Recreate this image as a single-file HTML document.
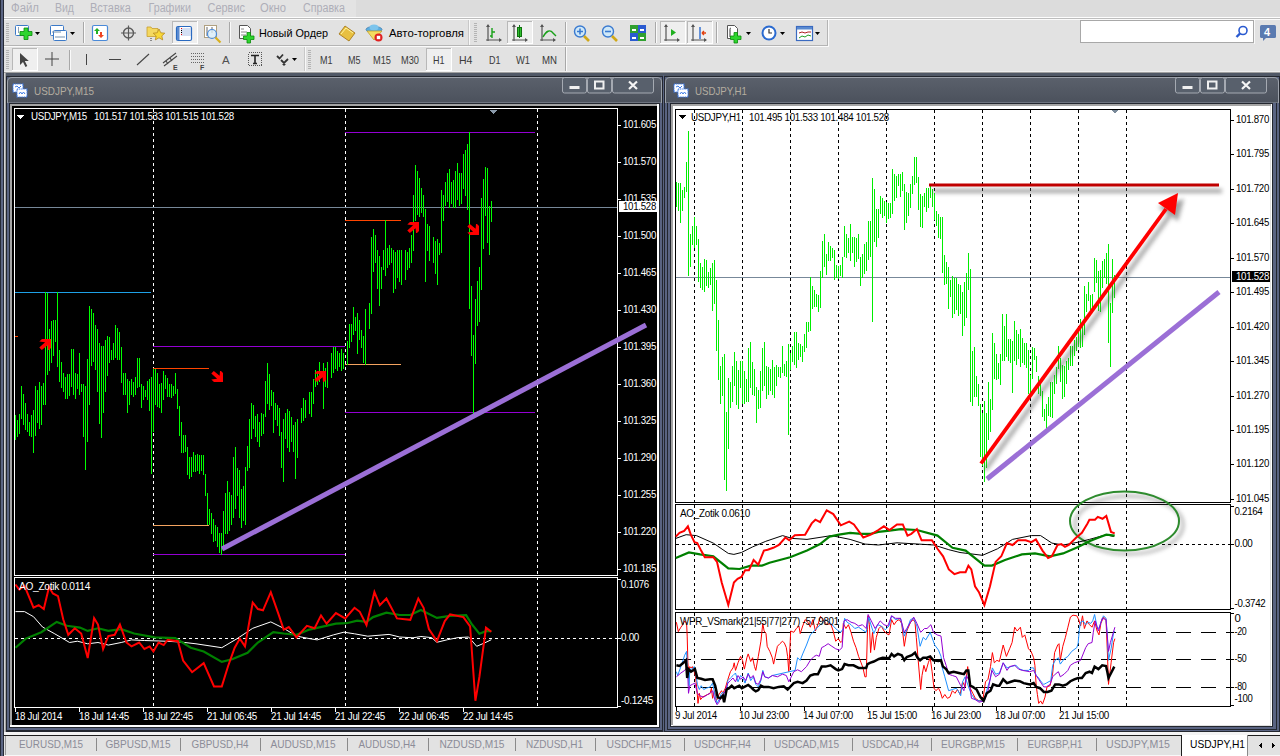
<!DOCTYPE html>
<html><head><meta charset="utf-8">
<style>
*{margin:0;padding:0;box-sizing:border-box}
html,body{width:1280px;height:756px;overflow:hidden;background:#dedede;font-family:"Liberation Sans",sans-serif}
svg{position:absolute;left:0;top:0}
text{font-family:"Liberation Sans",sans-serif}
</style></head><body>
<svg width="1280" height="756" viewBox="0 0 1280 756" shape-rendering="crispEdges">
<!-- ===== chrome ===== -->
<rect x="0" y="0" width="1280" height="756" fill="#e2e2e2"/>
<rect x="356" y="0" width="924" height="17" fill="#dcdcdc"/><rect x="4" y="0" width="352" height="17" fill="#e3e3e3"/>
<rect x="4" y="17" width="1276" height="1" fill="#fdfdfd"/>
<rect x="4" y="18" width="1276" height="1" fill="#bdbdbd"/>
<rect x="4" y="19" width="1276" height="1" fill="#fbfbfb"/>
<g font-size="12" fill="#aeaeb8"><text x="11.0" y="12" textLength="28.0" lengthAdjust="spacingAndGlyphs">Файл</text><text x="55.0" y="12" textLength="19.0" lengthAdjust="spacingAndGlyphs">Вид</text><text x="90.0" y="12" textLength="41.0" lengthAdjust="spacingAndGlyphs">Вставка</text><text x="148.5" y="12" textLength="42.5" lengthAdjust="spacingAndGlyphs">Графики</text><text x="207.5" y="12" textLength="37.5" lengthAdjust="spacingAndGlyphs">Сервис</text><text x="260.0" y="12" textLength="26.0" lengthAdjust="spacingAndGlyphs">Окно</text><text x="303.0" y="12" textLength="42.0" lengthAdjust="spacingAndGlyphs">Справка</text></g>
<g>
<rect x="4" y="20" width="824" height="25" fill="#e2e2e2"/>
<rect x="4" y="45" width="824" height="1" fill="#b4b4b4"/><rect x="4" y="46" width="825" height="1" fill="#fafafa"/>
<rect x="827" y="20" width="1" height="26" fill="#b4b4b4"/><rect x="828" y="20" width="1" height="27" fill="#fafafa"/>
<rect x="4" y="47" width="563" height="25" fill="#e2e2e2"/>
<rect x="565" y="47" width="1" height="24" fill="#a8a8a8"/><rect x="566" y="47" width="1" height="25" fill="#fafafa"/><rect x="305" y="47" width="1" height="25" fill="#f8f8f8"/><rect x="304" y="47" width="1" height="25" fill="#c8c8c8"/>
<rect x="469" y="20" width="1" height="25" fill="#f8f8f8"/><rect x="468" y="20" width="1" height="25" fill="#c8c8c8"/>
<rect x="6" y="23" width="3" height="1" fill="#b4b4b4"/><rect x="6" y="25" width="3" height="1" fill="#b4b4b4"/><rect x="6" y="27" width="3" height="1" fill="#b4b4b4"/><rect x="6" y="29" width="3" height="1" fill="#b4b4b4"/><rect x="6" y="31" width="3" height="1" fill="#b4b4b4"/><rect x="6" y="33" width="3" height="1" fill="#b4b4b4"/><rect x="6" y="35" width="3" height="1" fill="#b4b4b4"/><rect x="6" y="37" width="3" height="1" fill="#b4b4b4"/><rect x="6" y="39" width="3" height="1" fill="#b4b4b4"/><rect x="6" y="41" width="3" height="1" fill="#b4b4b4"/>
<rect x="6" y="50" width="3" height="1" fill="#b4b4b4"/><rect x="6" y="52" width="3" height="1" fill="#b4b4b4"/><rect x="6" y="54" width="3" height="1" fill="#b4b4b4"/><rect x="6" y="56" width="3" height="1" fill="#b4b4b4"/><rect x="6" y="58" width="3" height="1" fill="#b4b4b4"/><rect x="6" y="60" width="3" height="1" fill="#b4b4b4"/><rect x="6" y="62" width="3" height="1" fill="#b4b4b4"/><rect x="6" y="64" width="3" height="1" fill="#b4b4b4"/><rect x="6" y="66" width="3" height="1" fill="#b4b4b4"/><rect x="6" y="68" width="3" height="1" fill="#b4b4b4"/>
<rect x="308" y="50" width="3" height="1" fill="#b4b4b4"/><rect x="308" y="52" width="3" height="1" fill="#b4b4b4"/><rect x="308" y="54" width="3" height="1" fill="#b4b4b4"/><rect x="308" y="56" width="3" height="1" fill="#b4b4b4"/><rect x="308" y="58" width="3" height="1" fill="#b4b4b4"/><rect x="308" y="60" width="3" height="1" fill="#b4b4b4"/><rect x="308" y="62" width="3" height="1" fill="#b4b4b4"/><rect x="308" y="64" width="3" height="1" fill="#b4b4b4"/><rect x="308" y="66" width="3" height="1" fill="#b4b4b4"/><rect x="308" y="68" width="3" height="1" fill="#b4b4b4"/>
<rect x="474" y="23" width="3" height="1" fill="#b4b4b4"/><rect x="474" y="25" width="3" height="1" fill="#b4b4b4"/><rect x="474" y="27" width="3" height="1" fill="#b4b4b4"/><rect x="474" y="29" width="3" height="1" fill="#b4b4b4"/><rect x="474" y="31" width="3" height="1" fill="#b4b4b4"/><rect x="474" y="33" width="3" height="1" fill="#b4b4b4"/><rect x="474" y="35" width="3" height="1" fill="#b4b4b4"/><rect x="474" y="37" width="3" height="1" fill="#b4b4b4"/><rect x="474" y="39" width="3" height="1" fill="#b4b4b4"/><rect x="474" y="41" width="3" height="1" fill="#b4b4b4"/>
<rect x="83" y="22" width="1" height="21" fill="#a8a8a8"/><rect x="84" y="22" width="1" height="21" fill="#fafafa"/>
<rect x="229" y="22" width="1" height="21" fill="#a8a8a8"/><rect x="230" y="22" width="1" height="21" fill="#fafafa"/>
<rect x="565" y="22" width="1" height="21" fill="#a8a8a8"/><rect x="566" y="22" width="1" height="21" fill="#fafafa"/>
<rect x="655" y="22" width="1" height="21" fill="#a8a8a8"/><rect x="656" y="22" width="1" height="21" fill="#fafafa"/>
<rect x="716" y="22" width="1" height="21" fill="#a8a8a8"/><rect x="717" y="22" width="1" height="21" fill="#fafafa"/>
<rect x="69" y="50" width="1" height="20" fill="#a8a8a8"/><rect x="70" y="50" width="1" height="20" fill="#fafafa"/>
<rect x="172" y="21" width="26" height="23" fill="#efefef"/><path d="M172.5 44 V21.5 H198" stroke="#b8b8b8" fill="none"/><path d="M172 43.5 H197.5 V21" stroke="#fff" fill="none"/>
<rect x="507" y="21" width="26" height="23" fill="#efefef"/><path d="M507.5 44 V21.5 H533" stroke="#b8b8b8" fill="none"/><path d="M507 43.5 H532.5 V21" stroke="#fff" fill="none"/>
<rect x="660" y="21" width="26" height="23" fill="#efefef"/><path d="M660.5 44 V21.5 H686" stroke="#b8b8b8" fill="none"/><path d="M660 43.5 H685.5 V21" stroke="#fff" fill="none"/>
<rect x="687" y="21" width="26" height="23" fill="#efefef"/><path d="M687.5 44 V21.5 H713" stroke="#b8b8b8" fill="none"/><path d="M687 43.5 H712.5 V21" stroke="#fff" fill="none"/>
<rect x="12" y="48" width="26" height="23" fill="#efefef"/><path d="M12.5 71 V48.5 H38" stroke="#b8b8b8" fill="none"/><path d="M12 70.5 H37.5 V48" stroke="#fff" fill="none"/>
<rect x="426" y="48" width="26" height="23" fill="#efefef"/><path d="M426.5 71 V48.5 H452" stroke="#b8b8b8" fill="none"/><path d="M426 70.5 H451.5 V48" stroke="#fff" fill="none"/>
<g shape-rendering="auto">
<rect x="15.5" y="25.5" width="13" height="10" rx="1" fill="#fff" stroke="#3c7ac8"/><path d="M18.5 27v6" stroke="#8aa0b8"/>
<path d="M24 28h4v3.5h4v4h-4v4h-4v-4h-4v-4h4z" fill="#2ed52e" stroke="#0a8a0a" stroke-width="0.8"/>
<path d="M35 32 h5 l-2.5 3 z" fill="#000"/>
<rect x="50.5" y="25.5" width="13" height="10" rx="1" fill="#fff" stroke="#3c7ac8"/><rect x="53.5" y="30.5" width="13" height="10" rx="1" fill="#fff" stroke="#3c7ac8"/><path d="M55 37h10 M52 32h9" stroke="#7090b0"/>
<path d="M70 32 h5 l-2.5 3 z" fill="#000"/>
<rect x="92.5" y="25.5" width="15" height="15" rx="1.5" fill="#fff" stroke="#4a8ad8" stroke-width="1.2"/><path d="M97 28l3 3h-2v3h-2v-3h-2z" fill="#22b022"/><path d="M101 38l3 -3h-2v-3h-2v3h-2z" fill="#ee4422"/>
<circle cx="128.5" cy="33" r="5" fill="none" stroke="#5a5a5a" stroke-width="1.4"/><path d="M121 33h15 M128.5 25.5v15" stroke="#5a5a5a" stroke-width="1.2"/>
<path d="M147 27h4l1 1.5h6v8h-11z" fill="#f4d860" stroke="#c8a030" stroke-width="0.8"/><path d="M159 29l1.8 3.8 4 .4-3 2.7.9 4-3.7-2.1-3.7 2.1.9-4-3-2.7 4-.4z" fill="#f8d838" stroke="#b88a20" stroke-width="0.8"/><path d="M151 38v4" stroke="#333" stroke-dasharray="1 1"/>
<rect x="176.5" y="26.5" width="15" height="14" rx="1.5" fill="#fff" stroke="#2a6ac0" stroke-width="1.2"/><rect x="177" y="27" width="2.5" height="13" fill="#5a8ad0"/><path d="M181 29h10 M181 31h10 M181 33h10 M181 35h10" stroke="#a8c0e8"/><path d="M181 28.5h1 M181 34.5h1" stroke="#e00" /><path d="M181 30.5h1 M181 32.5h1" stroke="#000"/>
<rect x="204.5" y="25.5" width="12" height="12" fill="#fff" stroke="#b0a080"/><path d="M207 27v9 M212 27v6" stroke="#666"/><circle cx="212" cy="34" r="4.5" fill="#d8ecf8" fill-opacity="0.8" stroke="#4a8ad8" stroke-width="1.2"/><path d="M215.5 37.5l5 5" stroke="#d8b020" stroke-width="2.2"/>
<path d="M239.5 25.5h8l3 3v10h-11z" fill="#fff" stroke="#555"/><path d="M241 29h3 M241 32h6 M241 35h5" stroke="#888"/><path d="M247 32.5h3.5v3.5h3.5v3.5h-3.5v3.5h-3.5v-3.5h-3.5v-3.5h3.5z" fill="#2ed52e" stroke="#0a8a0a" stroke-width="0.8"/>
<text x="259" y="37" font-size="11.5" fill="#000" textLength="69" lengthAdjust="spacingAndGlyphs">Новый Ордер</text>
<path d="M339 34l6 -8l10 7l-6 8z" fill="#e8c040" stroke="#a07010" stroke-width="0.8"/><path d="M341 34l5-6l7 5" fill="none" stroke="#fff4a0" stroke-width="1"/>
<ellipse cx="374" cy="29.5" rx="8" ry="3" fill="#5aaee0" stroke="#3a7ab0" stroke-width="0.8"/><ellipse cx="374" cy="27.5" rx="4.5" ry="3" fill="#7cc4ec"/><path d="M367 31l7 9l8 -9z" fill="#f4dc60" stroke="#c0a030" stroke-width="0.8"/><circle cx="378.5" cy="37.5" r="4" fill="#e02020"/><rect x="376.8" y="35.8" width="3.4" height="3.4" fill="#fff"/>
<text x="389" y="37" font-size="11.5" fill="#000" textLength="75" lengthAdjust="spacingAndGlyphs">Авто-торговля</text>
<path d="M488.0 25v16 M486.0 40h15" stroke="#555" stroke-width="1.2"/><path d="M488.0 24l-2 3h4z M502.0 40l-3 -2v4z" fill="#555"/><path d="M492 28v10 M492 32h3 M490 36h2" stroke="#18a018" stroke-width="1.4"/>
<path d="M514.0 25v16 M512.0 40h15" stroke="#555" stroke-width="1.2"/><path d="M514.0 24l-2 3h4z M528.0 40l-3 -2v4z" fill="#555"/><rect x="517.5" y="27.5" width="4" height="9" fill="#30c030" stroke="#107010"/><path d="M519.5 25v13" stroke="#107010"/>
<path d="M542.0 25v16 M540.0 40h15" stroke="#555" stroke-width="1.2"/><path d="M542.0 24l-2 3h4z M556.0 40l-3 -2v4z" fill="#555"/><path d="M543 37c3 -6 7 -8 10 -4 l3 3" fill="none" stroke="#18a018" stroke-width="1.4"/>
<circle cx="580" cy="31.5" r="5.5" fill="#cfe8f8" stroke="#3a7ad0" stroke-width="1.4"/><path d="M577 31.5h6 M580 28.5v6" stroke="#3a7ad0" stroke-width="1.6"/><path d="M584 36l5 5" stroke="#d0a818" stroke-width="2.6"/>
<circle cx="608" cy="31.5" r="5.5" fill="#cfe8f8" stroke="#3a7ad0" stroke-width="1.4"/><path d="M605 31.5h6" stroke="#3a7ad0" stroke-width="1.6"/><path d="M612 36l5 5" stroke="#d0a818" stroke-width="2.6"/>
<rect x="630" y="25" width="8" height="8" fill="#30a030"/><rect x="638" y="25" width="8" height="8" fill="#2a5ad0"/><rect x="630" y="33" width="8" height="8" fill="#2a5ad0"/><rect x="638" y="33" width="8" height="8" fill="#30a030"/><path d="M632 29h4v2h-4z M640 29h4v2h-4z M632 37h4v2h-4z M640 37h4v2h-4z" fill="#fff"/>
<path d="M666.0 25v16 M664.0 40h15" stroke="#555" stroke-width="1.2"/><path d="M666.0 24l-2 3h4z M680.0 40l-3 -2v4z" fill="#555"/><path d="M671 29l5 3.5l-5 3.5z" fill="#20b020"/>
<path d="M693.0 25v16 M691.0 40h15" stroke="#555" stroke-width="1.2"/><path d="M693.0 24l-2 3h4z M707.0 40l-3 -2v4z" fill="#555"/><path d="M700 27v12" stroke="#2a6ad0" stroke-width="1.4"/><path d="M706 33l-4 0 M702 33l2 -2 M702 33l2 2" stroke="#e04010" stroke-width="1.4"/>
<path d="M727.5 25.5h7l3 3v10h-10z" fill="#fff" stroke="#555"/><path d="M731 28c-1 0-1 1-1 2v7" fill="none" stroke="#333"/><path d="M734 32.5h3.5v3.5h3.5v3.5h-3.5v3.5h-3.5v-3.5h-3.5v-3.5h3.5z" fill="#2ed52e" stroke="#0a8a0a" stroke-width="0.8"/><path d="M746 32 h5 l-2.5 3 z" fill="#000"/>
<circle cx="769" cy="33" r="7.5" fill="#2a6ad0"/><circle cx="769" cy="33" r="5.5" fill="#fff"/><path d="M769 29v4h3" stroke="#333" fill="none" stroke-width="1.2"/><path d="M780 32 h5 l-2.5 3 z" fill="#000"/>
<rect x="796.5" y="26.5" width="16" height="14" fill="#fff" stroke="#3a6ac0" stroke-width="1.2"/><rect x="797" y="27" width="15" height="2.5" fill="#5a8ad0"/><path d="M799 33l3-1 3 1 3-1 3 0" stroke="#b02020" fill="none"/><path d="M799 38l3-2 3 1 3-2 3 1" stroke="#20a020" fill="none"/><path d="M815 32 h5 l-2.5 3 z" fill="#000"/>
<path d="M20 53v12l3 -3l2.5 5l1.8 -1l-2.5 -5h4z" fill="#444"/>
<path d="M45 59h14 M52 52v14" stroke="#444" stroke-width="1"/>
<path d="M86.5 54v11" stroke="#444"/>
<path d="M109 59.5h12" stroke="#444"/>
<path d="M137 65l12 -11" stroke="#444" stroke-width="1.1"/>
<path d="M163 63l13 -10 M164 66l13 -10 M166 61l2 3 M170 58l2 3" stroke="#444" stroke-width="1.1"/><text x="173" y="70" font-size="7" font-weight="bold" fill="#444">E</text>
<path d="M191 53.5h13 M191 56.5h13 M191 59.5h13 M191 62.5h13" stroke="#666" stroke-dasharray="1 1"/><text x="200" y="70" font-size="7" font-weight="bold" fill="#444">F</text>
<text x="222" y="64" font-size="11.5" fill="#505050">A</text>
<rect x="248.5" y="52.5" width="13" height="13" fill="none" stroke="#555" stroke-dasharray="1 1" shape-rendering="crispEdges"/><path d="M251 55.5h8 M255 55.5v8 M253 63.5h4" stroke="#222" stroke-width="1.6"/>
<path d="M277 56l2.5 2.5l3.5 -4 M281 60l3 3l4 -4" stroke="#333" stroke-width="1.8" fill="none"/><path d="M282 64l2 2l2 -2z" fill="#333"/><path d="M292 58 h5 l-2.5 3 z" fill="#000"/>
</g>
<g font-size="10.5" fill="#3a3a3a">
<text x="320" y="64" textLength="12.5" lengthAdjust="spacingAndGlyphs">M1</text>
<text x="348" y="64" textLength="12.5" lengthAdjust="spacingAndGlyphs">M5</text>
<text x="373" y="64" textLength="18.0" lengthAdjust="spacingAndGlyphs">M15</text>
<text x="401" y="64" textLength="18.0" lengthAdjust="spacingAndGlyphs">M30</text>
<text x="433" y="64" textLength="11.5" lengthAdjust="spacingAndGlyphs">H1</text>
<text x="459" y="64" textLength="13.5" lengthAdjust="spacingAndGlyphs">H4</text>
<text x="489" y="64" textLength="11.5" lengthAdjust="spacingAndGlyphs">D1</text>
<text x="516" y="64" textLength="14.0" lengthAdjust="spacingAndGlyphs">W1</text>
<text x="542" y="64" textLength="15.0" lengthAdjust="spacingAndGlyphs">MN</text>
</g>
<rect x="1080.5" y="20.5" width="173" height="22" fill="#fff" stroke="#a8a8a8"/>
<g shape-rendering="auto"><circle cx="1243" cy="30.5" r="4" fill="none" stroke="#2a5ad0" stroke-width="1.6"/><path d="M1240 33.5l-3.5 3.5" stroke="#2a5ad0" stroke-width="2.4"/></g>
<rect x="1254" y="20" width="1" height="24" fill="#f8f8f8"/>
<g shape-rendering="auto"><rect x="1260" y="25" width="16" height="13" rx="1.5" fill="#5a7ab0"/><path d="M1263 37l0 4l4 -4z" fill="#5a7ab0"/><text x="1264" y="35.5" font-size="11" font-weight="bold" fill="#fff">4</text></g>
</g>
<!-- left strip -->
<rect x="0" y="0" width="4" height="756" fill="#262a36"/>
<rect x="1" y="0" width="2" height="756" fill="#5b6583"/>
<!-- MDI -->
<rect x="4" y="71" width="1276" height="1" fill="#eeeeee"/><rect x="4" y="72" width="1276" height="1" fill="#a0a0a0"/>
<rect x="4" y="73" width="1276" height="661" fill="#505866"/>
<rect x="4" y="73" width="1" height="660" fill="#d4d4d4"/><rect x="5" y="73" width="1" height="660" fill="#a4a4a4"/><rect x="663" y="75" width="1" height="656" fill="#5a6482"/>
<defs><linearGradient id="tg" x1="0" y1="0" x2="0" y2="1"><stop offset="0" stop-color="#5b616c"/><stop offset="1" stop-color="#4b515c"/></linearGradient></defs>
<rect x="6" y="76" width="657" height="656" fill="#23272f"/>
<rect x="7" y="77" width="655" height="654" fill="#5a6482"/>
<rect x="7" y="730" width="655" height="1" fill="#23272f"/>
<path d="M7 103 V82 Q7 77 12 77 H657 Q662 77 662 82 V103 Z" fill="url(#tg)" shape-rendering="auto"/>
<path d="M7.5 103 V82 Q7.5 77.5 12 77.5 H657 Q661.5 77.5 661.5 82 V103" fill="none" stroke="#9ca1aa" stroke-width="1" shape-rendering="auto"/>
<rect x="8" y="102" width="653" height="1" fill="#6e7480"/>
<rect x="9" y="103" width="651" height="625" fill="#23272f"/>
<rect x="10" y="104" width="649" height="623" fill="#ffffff"/>
<rect x="10" y="104" width="647" height="621" fill="#a4a4a4"/>
<rect x="12" y="106" width="645" height="619" fill="#000"/>
<g shape-rendering="auto"><rect x="13" y="84" width="10" height="8" fill="#fff" stroke="#3d7be8" stroke-width="1.2" stroke-dasharray="1.2 0.6"/>
<rect x="17" y="89" width="10" height="8" fill="#fff" stroke="#3d7be8" stroke-width="1.2" stroke-dasharray="1.2 0.6"/>
<path d="M15 87 l2 -1 l2 2 l2 -2" stroke="#3d7be8" fill="none" stroke-width="1"/><path d="M19 94 l1.5 -2 l1.5 2 l1.5 -2 l1.5 2" stroke="#3d7be8" fill="none" stroke-width="1"/></g>
<text x="34" y="95" font-size="11.5" fill="#b4ada0" textLength="60" lengthAdjust="spacingAndGlyphs">USDJPY,M15</text>
<g shape-rendering="auto">
<rect x="562.5" y="77.5" width="24.0" height="15.5" rx="2" fill="#58606c" stroke="#a5aab2" stroke-width="1"/>
<rect x="587.5" y="77.5" width="24.0" height="15.5" rx="2" fill="#58606c" stroke="#a5aab2" stroke-width="1"/>
<rect x="612.5" y="77.5" width="41.0" height="15.5" rx="2" fill="#58606c" stroke="#a5aab2" stroke-width="1"/>
<rect x="569.5" y="86" width="10" height="3" fill="#f0f0f0"/>
<rect x="595.0" y="81.5" width="8.5" height="7" fill="none" stroke="#f0f0f0" stroke-width="2"/>
<path d="M629.0 81.5 L637.0 89 M637.0 81.5 L629.0 89" stroke="#f4f4f4" stroke-width="2.2"/>
</g>
<rect x="664" y="76" width="616" height="656" fill="#23272f"/>
<rect x="665" y="77" width="614" height="654" fill="#5a6482"/>
<rect x="667" y="103" width="1" height="627" fill="#23272f"/>
<rect x="1276" y="103" width="1" height="627" fill="#23272f"/>
<rect x="667" y="729" width="610" height="1" fill="#23272f"/>
<path d="M665 103 V82 Q665 77 670 77 H1274 Q1279 77 1279 82 V103 Z" fill="url(#tg)" shape-rendering="auto"/>
<path d="M665.5 103 V82 Q665.5 77.5 670 77.5 H1274 Q1278.5 77.5 1278.5 82 V103" fill="none" stroke="#9ca1aa" stroke-width="1" shape-rendering="auto"/>
<rect x="666" y="102" width="612" height="1" fill="#6e7480"/>
<rect x="670" y="103" width="603" height="624" fill="#23272f"/>
<rect x="671" y="104" width="601" height="622" fill="#ffffff"/>
<rect x="671" y="104" width="600" height="2" fill="#a4a4a4"/>
<rect x="671" y="104" width="2" height="621" fill="#a4a4a4"/>
<rect x="1270" y="106" width="1" height="619" fill="#e0e0e0"/>
<rect x="673" y="725" width="598" height="1" fill="#e0e0e0"/>
<g shape-rendering="auto"><rect x="674" y="84" width="10" height="8" fill="#fff" stroke="#3d7be8" stroke-width="1.2" stroke-dasharray="1.2 0.6"/>
<rect x="678" y="89" width="10" height="8" fill="#fff" stroke="#3d7be8" stroke-width="1.2" stroke-dasharray="1.2 0.6"/>
<path d="M676 87 l2 -1 l2 2 l2 -2" stroke="#3d7be8" fill="none" stroke-width="1"/><path d="M680 94 l1.5 -2 l1.5 2 l1.5 -2 l1.5 2" stroke="#3d7be8" fill="none" stroke-width="1"/></g>
<text x="695" y="95" font-size="11.5" fill="#b4ada0" textLength="52" lengthAdjust="spacingAndGlyphs">USDJPY,H1</text>
<g shape-rendering="auto">
<rect x="1175.5" y="77.5" width="24.0" height="15.5" rx="2" fill="#58606c" stroke="#a5aab2" stroke-width="1"/>
<rect x="1200.5" y="77.5" width="24.0" height="15.5" rx="2" fill="#58606c" stroke="#a5aab2" stroke-width="1"/>
<rect x="1225.5" y="77.5" width="41.0" height="15.5" rx="2" fill="#58606c" stroke="#a5aab2" stroke-width="1"/>
<rect x="1182.5" y="86" width="10" height="3" fill="#f0f0f0"/>
<rect x="1208.0" y="81.5" width="8.5" height="7" fill="none" stroke="#f0f0f0" stroke-width="2"/>
<path d="M1242.0 81.5 L1250.0 89 M1250.0 81.5 L1242.0 89" stroke="#f4f4f4" stroke-width="2.2"/>
</g>
<g>
<rect x="14.5" y="108.5" width="603" height="467" fill="none" stroke="#fff"/>
<rect x="14.5" y="577.5" width="603" height="130" fill="none" stroke="#fff"/>
<path d="M153.5 109 V707" stroke="#fff" stroke-dasharray="3 3"/>
<path d="M345.5 109 V707" stroke="#fff" stroke-dasharray="3 3"/>
<path d="M537.5 109 V707" stroke="#fff" stroke-dasharray="3 3"/>
<path d="M15 638.5 H617" stroke="#fff" stroke-dasharray="3 3"/>
<path d="M15 207.5 H617" stroke="#778899"/>
<path d="M15 292.5 H151" stroke="#1ea0e6"/>
<path d="M153 346.5 H345 M153 554.5 H345 M345 132.5 H535 M345 412.5 H535" stroke="#9400d3"/>
<path d="M153 368.5 H209 M345 220.5 H401" stroke="#ff4500"/>
<path d="M153 525.5 H209 M345 364.5 H401" stroke="#f4a460"/>
<path d="M15 336.5 H18" stroke="#ff4500"/>
<path d="M489 110 h8 l-4 4 z" fill="#8a9aaa"/>
<path d="M15.5 415 V440 M17.5 420 V437 M19.5 414 V434 M21.5 386 V419 M23.5 394 V425 M25.5 403 V430 M27.5 414 V432 M29.5 422 V436 M31.5 415 V437 M33.5 410 V453 M35.5 386 V436 M37.5 390 V423 M39.5 382 V429 M41.5 386 V425 M43.5 383 V405 M45.5 292 V405 M47.5 293 V375 M49.5 329 V371 M51.5 321 V363 M53.5 320 V356 M55.5 320 V342 M57.5 292 V367 M59.5 350 V382 M61.5 362 V388 M63.5 373 V392 M65.5 377 V399 M67.5 374 V399 M69.5 374 V396 M71.5 349 V387 M73.5 349 V395 M75.5 373 V399 M77.5 374 V389 M79.5 353 V395 M81.5 384 V392 M83.5 384 V437 M85.5 386 V470 M87.5 359 V442 M89.5 306 V405 M91.5 309 V366 M93.5 313 V362 M95.5 325 V370 M97.5 329 V392 M99.5 343 V424 M101.5 346 V438 M103.5 346 V413 M105.5 340 V392 M107.5 336 V376 M109.5 337 V363 M111.5 350 V360 M113.5 343 V360 M115.5 325 V358 M117.5 328 V360 M119.5 332 V360 M121.5 347 V383 M123.5 373 V395 M125.5 373 V395 M127.5 379 V413 M129.5 381 V405 M131.5 379 V395 M133.5 382 V397 M135.5 377 V395 M137.5 358 V388 M139.5 358 V387 M141.5 384 V408 M143.5 386 V400 M145.5 390 V397 M147.5 381 V400 M149.5 379 V411 M151.5 377 V474 M153.5 369 V432 M155.5 369 V405 M157.5 373 V407 M159.5 384 V408 M161.5 383 V413 M163.5 371 V400 M165.5 375 V389 M167.5 378 V397 M169.5 384 V397 M171.5 384 V398 M173.5 386 V396 M175.5 373 V394 M177.5 389 V409 M179.5 406 V436 M181.5 422 V453 M183.5 435 V453 M185.5 435 V452 M187.5 447 V475 M189.5 457 V479 M191.5 457 V477 M193.5 452 V472 M195.5 455 V472 M197.5 454 V471 M199.5 455 V474 M201.5 455 V471 M203.5 455 V475 M205.5 474 V496 M207.5 493 V525 M209.5 509 V525 M211.5 513 V534 M213.5 519 V542 M215.5 525 V541 M217.5 527 V547 M219.5 533 V553 M221.5 533 V555 M223.5 511 V547 M225.5 493 V534 M227.5 481 V534 M229.5 492 V531 M231.5 495 V525 M233.5 457 V518 M235.5 447 V509 M237.5 468 V496 M239.5 470 V518 M241.5 489 V528 M243.5 486 V521 M245.5 467 V525 M247.5 446 V471 M249.5 419 V468 M251.5 403 V439 M253.5 405 V429 M255.5 416 V437 M257.5 414 V442 M259.5 422 V447 M261.5 413 V436 M263.5 414 V434 M265.5 381 V417 M267.5 363 V404 M269.5 374 V410 M271.5 390 V406 M273.5 392 V433 M275.5 403 V420 M277.5 405 V426 M279.5 408 V436 M281.5 432 V468 M283.5 419 V482 M285.5 413 V439 M287.5 409 V448 M289.5 411 V452 M291.5 417 V442 M293.5 425 V452 M295.5 422 V479 M297.5 419 V458 M301.5 408 V423 M303.5 398 V421 M305.5 400 V418 M309.5 392 V414 M311.5 392 V417 M313.5 379 V404 M315.5 370 V387 M317.5 373 V385 M319.5 362 V382 M323.5 363 V409 M325.5 368 V387 M327.5 362 V388 M331.5 353 V378 M333.5 347 V373 M335.5 347 V369 M337.5 351 V371 M339.5 353 V367 M341.5 349 V371 M343.5 353 V369 M347.5 341 V365 M349.5 324 V348 M351.5 324 V342 M353.5 307 V335 M355.5 317 V331 M357.5 313 V354 M359.5 320 V340 M361.5 330 V348 M363.5 336 V363 M365.5 309 V365 M369.5 303 V329 M371.5 237 V314 M373.5 229 V272 M375.5 235 V263 M377.5 250 V289 M379.5 256 V306 M381.5 267 V289 M383.5 250 V270 M385.5 220 V276 M387.5 248 V268 M389.5 245 V265 M391.5 248 V263 M393.5 250 V293 M395.5 252 V289 M397.5 250 V278 M399.5 250 V282 M401.5 250 V285 M405.5 250 V280 M407.5 252 V270 M409.5 248 V268 M411.5 235 V263 M413.5 195 V251 M415.5 165 V221 M417.5 171 V215 M419.5 178 V217 M421.5 188 V213 M423.5 195 V217 M425.5 209 V282 M427.5 224 V251 M429.5 226 V261 M433.5 237 V263 M435.5 241 V274 M437.5 239 V285 M439.5 243 V255 M441.5 190 V253 M443.5 195 V221 M445.5 182 V206 M447.5 173 V202 M449.5 169 V208 M451.5 182 V204 M453.5 180 V208 M455.5 171 V208 M457.5 163 V200 M459.5 173 V206 M461.5 173 V204 M463.5 154 V189 M465.5 150 V196 M467.5 144 V210 M469.5 132 V309 M471.5 286 V356 M473.5 335 V414 M475.5 299 V364 M477.5 281 V326 M479.5 267 V322 M481.5 198 V290 M483.5 179 V249 M485.5 167 V216 M487.5 168 V243 M489.5 206 V255 M491.5 201 V222" stroke="#00ff00" stroke-width="1"/>
<path d="M222 549 L646 325" stroke="#9b6fd6" stroke-width="5" stroke-linecap="butt" shape-rendering="auto"/>
<polygon points="39.3,347.4 41.8,350.0 47.6,345.2 48.0,350.0 49.0,350.0 51.0,348.0 51.0,339.0 42.0,339.0 39.3,341.5 45.1,342.3" fill="#ff0000" shape-rendering="auto"/>
<polygon points="211.3,373.6 213.8,371.0 219.6,375.8 220.0,371.0 221.0,371.0 223.0,373.0 223.0,382.0 214.0,382.0 211.3,379.5 217.1,378.7" fill="#ff0000" shape-rendering="auto"/>
<polygon points="314.3,379.4 316.8,382.0 322.6,377.2 323.0,382.0 324.0,382.0 326.0,380.0 326.0,371.0 317.0,371.0 314.3,373.5 320.1,374.3" fill="#ff0000" shape-rendering="auto"/>
<polygon points="407.3,230.4 409.8,233.0 415.6,228.2 416.0,233.0 417.0,233.0 419.0,231.0 419.0,222.0 410.0,222.0 407.3,224.5 413.1,225.3" fill="#ff0000" shape-rendering="auto"/>
<polygon points="467.3,226.6 469.8,224.0 475.6,228.8 476.0,224.0 477.0,224.0 479.0,226.0 479.0,235.0 470.0,235.0 467.3,232.5 473.1,231.7" fill="#ff0000" shape-rendering="auto"/>
<polyline points="15.5,611.6 24.5,611.6 33.5,616.7 42.5,627.0 54.2,633.5 69.6,642.5 77.4,641.2 87.7,643.8 98.0,642.5 108.3,645.1 121.2,642.5 131.5,639.9 144.4,640.5 165.0,641.2 180.5,642.0 196.0,643.8 221.8,647.7 237.2,638.6 252.7,628.3 270.8,621.9 283.7,628.3 296.5,636.1 309.4,638.6 317.2,639.9 333.3,634.9 343.9,632.2 354.5,633.8 367.8,636.2 389.1,634.4 399.7,637.0 413.0,637.8 420.9,636.5 431.6,637.6 436.9,642.3 447.5,639.7 458.1,637.6 468.7,637.0 476.7,646.3 484.7,642.9 491.3,639.7" fill="none" stroke="#ffffff" stroke-width="1" shape-rendering="auto"/>
<polyline points="15.5,647.7 25.8,638.6 41.3,632.2 56.7,621.9 67.0,625.8 79.9,627.6 87.7,630.9 98.0,628.3 108.3,630.9 121.2,629.1 134.1,633.5 154.7,637.4 175.3,638.1 190.8,647.7 203.7,651.5 221.8,661.9 232.1,659.3 247.6,652.8 257.9,642.5 273.3,632.2 283.7,633.5 296.5,634.8 309.4,629.6 335.9,623.7 346.6,623.2 357.2,620.6 366.5,621.9 373.1,617.1 386.4,612.6 399.7,615.0 410.3,615.0 420.9,609.9 436.9,617.9 450.1,615.8 466.1,615.2 471.4,623.7 479.4,633.8 486.0,631.2 491.3,631.2" fill="none" stroke="#008000" stroke-width="2.2" shape-rendering="auto"/>
<polyline points="15.5,584.5 19.3,589.7 24.5,585.8 33.5,607.7 38.7,605.1 43.8,609.0 49.0,587.1 52.9,593.5 58.0,596.1 63.2,619.3 68.3,634.8 74.8,628.3 81.2,633.5 87.7,658.0 94.1,618.0 98.0,624.5 103.1,649.0 108.3,636.1 114.7,634.8 119.9,624.5 126.4,642.5 131.5,646.4 139.2,642.5 144.4,649.0 149.6,646.4 153.4,651.5 158.6,642.5 163.7,645.1 167.6,639.9 177.9,641.2 183.1,660.6 192.1,672.2 203.7,663.1 214.0,686.4 221.8,686.4 228.2,665.7 234.7,647.7 239.8,638.6 245.0,646.4 252.7,602.5 257.9,609.0 263.0,610.3 270.8,592.2 278.5,614.2 283.7,629.6 288.8,627.0 296.5,637.4 306.9,625.8 314.6,628.3 321.0,615.4 326.6,623.7 335.9,613.1 345.2,618.4 354.5,607.8 359.8,611.8 366.5,625.1 374.4,591.9 379.8,605.2 386.4,598.5 397.0,618.4 410.3,619.8 418.3,598.5 423.6,607.8 428.9,629.1 436.9,641.0 444.8,621.1 450.1,614.4 463.4,617.1 470.1,626.4 475.4,700.8 479.4,676.9 486.0,627.7 491.3,631.7" fill="none" stroke="#ff0000" stroke-width="2" shape-rendering="auto"/>
<g font-size="10" fill="#fff" letter-spacing="-0.3">
<rect x="618" y="125" width="3" height="1" fill="#fff"/>
<text x="623" y="128.2" textLength="33" lengthAdjust="spacingAndGlyphs">101.605</text>
<rect x="618" y="162" width="3" height="1" fill="#fff"/>
<text x="623" y="165.2" textLength="33" lengthAdjust="spacingAndGlyphs">101.570</text>
<rect x="618" y="199" width="3" height="1" fill="#fff"/>
<text x="623" y="202.2" textLength="33" lengthAdjust="spacingAndGlyphs">101.535</text>
<rect x="618" y="236" width="3" height="1" fill="#fff"/>
<text x="623" y="239.2" textLength="33" lengthAdjust="spacingAndGlyphs">101.500</text>
<rect x="618" y="273" width="3" height="1" fill="#fff"/>
<text x="623" y="276.2" textLength="33" lengthAdjust="spacingAndGlyphs">101.465</text>
<rect x="618" y="310" width="3" height="1" fill="#fff"/>
<text x="623" y="313.2" textLength="33" lengthAdjust="spacingAndGlyphs">101.430</text>
<rect x="618" y="347" width="3" height="1" fill="#fff"/>
<text x="623" y="350.2" textLength="33" lengthAdjust="spacingAndGlyphs">101.395</text>
<rect x="618" y="384" width="3" height="1" fill="#fff"/>
<text x="623" y="387.2" textLength="33" lengthAdjust="spacingAndGlyphs">101.360</text>
<rect x="618" y="421" width="3" height="1" fill="#fff"/>
<text x="623" y="424.2" textLength="33" lengthAdjust="spacingAndGlyphs">101.325</text>
<rect x="618" y="458" width="3" height="1" fill="#fff"/>
<text x="623" y="461.2" textLength="33" lengthAdjust="spacingAndGlyphs">101.290</text>
<rect x="618" y="495" width="3" height="1" fill="#fff"/>
<text x="623" y="498.2" textLength="33" lengthAdjust="spacingAndGlyphs">101.255</text>
<rect x="618" y="532" width="3" height="1" fill="#fff"/>
<text x="623" y="535.2" textLength="33" lengthAdjust="spacingAndGlyphs">101.220</text>
<rect x="618" y="569" width="3" height="1" fill="#fff"/>
<text x="623" y="572.2" textLength="33" lengthAdjust="spacingAndGlyphs">101.185</text>
<rect x="619" y="201" width="38" height="11" fill="#fff"/><text x="623" y="210" fill="#000" textLength="33" lengthAdjust="spacingAndGlyphs">101.528</text>
<rect x="618" y="579" width="3" height="1" fill="#fff"/>
<text x="621" y="588.0" textLength="28" lengthAdjust="spacingAndGlyphs">0.1076</text>
<rect x="618" y="638" width="3" height="1" fill="#fff"/>
<text x="621" y="641.0" textLength="18" lengthAdjust="spacingAndGlyphs">0.00</text>
<rect x="618" y="706" width="3" height="1" fill="#fff"/>
<text x="621" y="704.0" textLength="32" lengthAdjust="spacingAndGlyphs">-0.1245</text>
<rect x="15" y="708" width="1" height="4" fill="#fff"/>
<text x="15" y="720" textLength="47" lengthAdjust="spacingAndGlyphs">18 Jul 2014</text>
<rect x="79" y="708" width="1" height="4" fill="#fff"/>
<text x="79" y="720" textLength="50" lengthAdjust="spacingAndGlyphs">18 Jul 14:45</text>
<rect x="143" y="708" width="1" height="4" fill="#fff"/>
<text x="143" y="720" textLength="50" lengthAdjust="spacingAndGlyphs">18 Jul 22:45</text>
<rect x="207" y="708" width="1" height="4" fill="#fff"/>
<text x="207" y="720" textLength="50" lengthAdjust="spacingAndGlyphs">21 Jul 06:45</text>
<rect x="271" y="708" width="1" height="4" fill="#fff"/>
<text x="271" y="720" textLength="50" lengthAdjust="spacingAndGlyphs">21 Jul 14:45</text>
<rect x="335" y="708" width="1" height="4" fill="#fff"/>
<text x="335" y="720" textLength="50" lengthAdjust="spacingAndGlyphs">21 Jul 22:45</text>
<rect x="399" y="708" width="1" height="4" fill="#fff"/>
<text x="399" y="720" textLength="50" lengthAdjust="spacingAndGlyphs">22 Jul 06:45</text>
<rect x="463" y="708" width="1" height="4" fill="#fff"/>
<text x="463" y="720" textLength="50" lengthAdjust="spacingAndGlyphs">22 Jul 14:45</text>
<path d="M17 115 h7 l-3.5 4 z" fill="#fff"/>
<text x="31" y="120" textLength="56" lengthAdjust="spacingAndGlyphs">USDJPY,M15</text><text x="94" y="120" textLength="140" lengthAdjust="spacingAndGlyphs">101.517 101.533 101.515 101.528</text>
<text x="19" y="590" textLength="71" lengthAdjust="spacingAndGlyphs">AO_Zotik 0.0114</text>
</g>
</g>
<g>
<rect x="675.5" y="109.5" width="555" height="393" fill="none" stroke="#000"/>
<rect x="675.5" y="504.5" width="555" height="105" fill="none" stroke="#000"/>
<rect x="675.5" y="612.5" width="555" height="94" fill="none" stroke="#000"/>
<path d="M694.5 110 V502 M694.5 505 V609 M694.5 613 V706" stroke="#000" stroke-dasharray="3 3"/>
<path d="M742.5 110 V502 M742.5 505 V609 M742.5 613 V706" stroke="#000" stroke-dasharray="3 3"/>
<path d="M790.5 110 V502 M790.5 505 V609 M790.5 613 V706" stroke="#000" stroke-dasharray="3 3"/>
<path d="M838.5 110 V502 M838.5 505 V609 M838.5 613 V706" stroke="#000" stroke-dasharray="3 3"/>
<path d="M886.5 110 V502 M886.5 505 V609 M886.5 613 V706" stroke="#000" stroke-dasharray="3 3"/>
<path d="M934.5 110 V502 M934.5 505 V609 M934.5 613 V706" stroke="#000" stroke-dasharray="3 3"/>
<path d="M982.5 110 V502 M982.5 505 V609 M982.5 613 V706" stroke="#000" stroke-dasharray="3 3"/>
<path d="M1030.5 110 V502 M1030.5 505 V609 M1030.5 613 V706" stroke="#000" stroke-dasharray="3 3"/>
<path d="M1078.5 110 V502 M1078.5 505 V609 M1078.5 613 V706" stroke="#000" stroke-dasharray="3 3"/>
<path d="M1126.5 110 V502 M1126.5 505 V609 M1126.5 613 V706" stroke="#000" stroke-dasharray="3 3"/>
<path d="M676 544.5 H1230" stroke="#000" stroke-dasharray="3 3"/>
<path d="M676 632.5 H1230 M676 659.5 H1230 M676 687.5 H1230" stroke="#000" stroke-dasharray="15 10"/>
<path d="M676 277.5 H1230" stroke="#778899"/>
<path d="M1112 110 l6 0 l-3 4 z" fill="#7a8a9a"/>
<path d="M676.5 182 V207 M678.5 183 V211 M680.5 183 V223 M682.5 190 V211 M684.5 187 V198 M686.5 162 V192 M688.5 131 V276 M690.5 234 V267 M692.5 226 V245 M694.5 217 V248 M696.5 226 V245 M698.5 239 V282 M700.5 263 V288 M702.5 267 V290 M704.5 259 V292 M706.5 260 V286 M708.5 272 V288 M710.5 268 V285 M712.5 263 V311 M714.5 260 V304 M716.5 280 V351 M718.5 320 V380 M720.5 366 V404 M722.5 357 V396 M724.5 354 V480 M726.5 412 V491 M728.5 378 V449 M730.5 382 V408 M732.5 366 V402 M734.5 352 V386 M736.5 361 V405 M738.5 370 V409 M740.5 361 V388 M742.5 361 V404 M744.5 371 V404 M746.5 379 V402 M748.5 348 V402 M750.5 342 V388 M752.5 362 V395 M754.5 369 V396 M756.5 387 V423 M758.5 390 V409 M760.5 371 V408 M762.5 348 V391 M764.5 342 V386 M766.5 366 V399 M768.5 367 V395 M770.5 369 V391 M772.5 360 V395 M774.5 367 V398 M776.5 365 V386 M778.5 367 V377 M780.5 367 V378 M782.5 346 V373 M784.5 364 V376 M786.5 361 V377 M788.5 344 V435 M790.5 353 V370 M792.5 346 V362 M794.5 332 V365 M796.5 332 V368 M798.5 343 V360 M800.5 344 V357 M802.5 346 V362 M804.5 334 V352 M806.5 322 V348 M808.5 322 V332 M810.5 277 V331 M812.5 286 V309 M814.5 290 V307 M816.5 294 V307 M818.5 295 V312 M820.5 271 V308 M822.5 241 V278 M824.5 234 V267 M826.5 254 V275 M828.5 242 V261 M830.5 246 V261 M832.5 248 V258 M834.5 250 V280 M836.5 265 V278 M838.5 266 V279 M840.5 265 V276 M842.5 257 V278 M844.5 226 V257 M846.5 234 V258 M848.5 238 V253 M850.5 224 V261 M852.5 237 V253 M854.5 237 V267 M856.5 238 V262 M858.5 234 V259 M860.5 257 V286 M862.5 254 V278 M864.5 244 V274 M866.5 242 V271 M868.5 221 V260 M870.5 221 V257 M872.5 178 V322 M874.5 189 V242 M876.5 209 V247 M878.5 209 V238 M880.5 196 V214 M882.5 198 V218 M884.5 201 V216 M886.5 202 V223 M888.5 203 V219 M890.5 203 V218 M892.5 169 V214 M894.5 174 V201 M896.5 176 V198 M898.5 174 V186 M900.5 174 V197 M902.5 172 V191 M904.5 184 V230 M906.5 192 V223 M908.5 193 V216 M910.5 184 V208 M912.5 176 V194 M914.5 157 V185 M916.5 157 V183 M918.5 177 V210 M920.5 194 V227 M922.5 196 V228 M924.5 193 V207 M926.5 188 V212 M928.5 188 V208 M930.5 186 V198 M932.5 189 V207 M934.5 193 V220 M936.5 211 V226 M938.5 214 V238 M940.5 217 V239 M942.5 217 V273 M944.5 255 V285 M946.5 262 V284 M948.5 267 V309 M950.5 280 V297 M952.5 276 V318 M954.5 278 V314 M956.5 278 V310 M958.5 284 V316 M960.5 285 V314 M962.5 292 V336 M964.5 282 V326 M966.5 273 V318 M968.5 253 V290 M970.5 269 V402 M972.5 351 V406 M974.5 347 V397 M976.5 376 V397 M978.5 384 V406 M980.5 404 V457 M982.5 413 V466 M984.5 401 V482 M986.5 413 V468 M988.5 382 V440 M990.5 399 V432 M992.5 333 V410 M994.5 343 V379 M996.5 354 V380 M998.5 363 V379 M1000.5 354 V385 M1002.5 314 V361 M1004.5 326 V361 M1006.5 314 V357 M1008.5 339 V361 M1010.5 339 V363 M1012.5 341 V393 M1014.5 321 V361 M1016.5 330 V365 M1018.5 334 V359 M1020.5 329 V367 M1022.5 338 V363 M1024.5 343 V365 M1026.5 343 V368 M1028.5 350 V394 M1030.5 375 V394 M1032.5 347 V379 M1034.5 348 V360 M1036.5 356 V372 M1038.5 376 V394 M1040.5 384 V396 M1042.5 391 V417 M1044.5 409 V421 M1046.5 404 V429 M1048.5 397 V416 M1050.5 382 V417 M1052.5 382 V418 M1054.5 375 V394 M1056.5 367 V384 M1058.5 346 V369 M1060.5 358 V382 M1062.5 365 V399 M1064.5 366 V397 M1066.5 361 V384 M1068.5 358 V370 M1070.5 346 V366 M1072.5 346 V366 M1074.5 340 V356 M1076.5 337 V351 M1078.5 332 V347 M1080.5 319 V348 M1082.5 326 V347 M1084.5 286 V335 M1086.5 294 V312 M1088.5 282 V301 M1090.5 295 V310 M1092.5 294 V308 M1094.5 258 V292 M1096.5 260 V283 M1098.5 271 V311 M1100.5 270 V312 M1102.5 261 V288 M1104.5 259 V278 M1106.5 253 V284 M1108.5 244 V343 M1110.5 303 V367 M1112.5 259 V313 M1114.5 275 V298" stroke="#00ee00" stroke-width="1"/>
<defs><filter id="sh" x="-20%" y="-20%" width="140%" height="140%"><feGaussianBlur stdDeviation="2.2"/></filter></defs>
<g shape-rendering="auto">
<g filter="url(#sh)" opacity="0.55"><path d="M933 191 H1222" stroke="#555" stroke-width="4"/><path d="M985 470 L1170 215" stroke="#555" stroke-width="4"/><path d="M1184 199 l-26 8 l20 14 z" fill="#555"/><ellipse cx="1129" cy="525" rx="54" ry="29" fill="none" stroke="#555" stroke-width="2.5"/></g>
<path d="M929 185 H1219" stroke="#c00000" stroke-width="3"/>
<path d="M981 463.5 L1166 209" stroke="#ff0000" stroke-width="3.8"/>
<path d="M1178 193 l-20 10 l17 12 z" fill="#ff0000"/>
<path d="M987 479 L1219 292" stroke="#9b6fd6" stroke-width="5"/>
<ellipse cx="1124.5" cy="521" rx="54.5" ry="29.5" fill="none" stroke="#2e8b2e" stroke-width="2"/>
</g>
<g shape-rendering="auto">
<polyline points="675.8,538.4 686.1,534.7 696.4,535.6 713.3,543.1 728.3,553.4 733.9,554.4 741.4,552.5 752.6,546.9 765.8,541.3 782.6,535.6 792.0,538.4 807.0,539.4 831.4,535.6 850.1,539.4 865.1,544.1 878.3,545.0 897.0,542.8 918.8,544.1 933.8,545.0 948.8,549.7 960.0,552.5 982.5,555.3 997.5,548.8 1012.5,539.4 1031.3,535.6 1040.6,535.6 1051.9,543.1 1063.1,545.0 1078.1,542.2 1089.4,539.4 1106.3,534.7 1113.8,536.6" fill="none" stroke="#000" stroke-width="1"/>
<polyline points="675.8,558.1 688.9,552.5 700.1,554.4 713.3,556.3 728.3,568.4 739.5,569.0 750.8,565.6 762.0,565.6 769.5,562.8 790.1,557.2 807.0,550.6 820.1,544.1 829.5,536.6 838.9,534.7 850.1,532.8 861.4,533.8 870.8,533.8 878.3,531.9 887.6,530.9 900.8,529.1 916.9,530.0 937.5,535.6 952.5,547.8 965.6,550.6 984.4,565.6 991.9,565.6 1005.0,560.0 1021.9,554.4 1035.0,553.4 1050.0,556.3 1063.1,553.4 1078.1,546.9 1089.4,541.3 1098.8,537.5 1106.3,534.7 1114.7,535.6" fill="none" stroke="#008000" stroke-width="2.2"/>
<polyline points="675.8,536.6 679.5,532.8 684.2,530.9 687.9,526.3 690.8,534.7 694.5,542.2 697.3,543.1 701.1,550.6 704.8,557.2 713.3,557.2 717.0,561.9 721.7,582.5 728.3,605.0 733.9,582.5 737.6,578.8 741.4,576.9 745.1,570.3 748.9,570.3 753.6,560.0 758.3,564.7 763.9,550.6 767.6,549.7 773.3,547.8 778.9,545.0 785.4,537.5 789.2,540.3 794.8,535.3 805.1,534.7 811.7,523.4 815.4,519.7 820.1,522.1 826.7,510.3 833.3,514.1 840.8,525.3 849.2,521.6 853.9,524.4 863.3,537.5 870.8,534.7 878.3,530.0 883.9,526.3 889.5,530.0 897.0,524.4 902.8,524.4 907.5,535.6 911.3,533.8 916.9,529.1 921.6,540.3 931.9,540.3 937.5,548.8 943.1,556.3 948.8,569.4 954.4,574.1 960.0,572.2 965.6,572.2 968.4,565.6 971.3,569.4 975.0,586.3 978.8,591.9 984.4,605.0 990.0,586.3 995.6,561.9 1001.3,556.3 1006.9,543.1 1012.5,545.0 1018.1,540.3 1025.6,540.3 1031.3,542.2 1035.9,539.4 1042.5,550.6 1048.1,558.1 1051.9,556.3 1057.5,545.0 1061.3,544.1 1065.0,546.9 1068.8,545.0 1076.3,537.5 1081.9,532.8 1087.5,523.4 1089.4,519.7 1095.0,519.7 1097.8,516.9 1102.5,518.8 1106.3,515.9 1111.0,531.9 1114.7,533.4" fill="none" stroke="#ff0000" stroke-width="2"/>
<polyline points="676.4,622.2 678.3,631.7 680.9,627.2 682.8,624.7 684.7,620.9 686.6,623.4 687.2,636.1 687.9,662.8 688.5,671.7 689.8,666.6 691.0,667.9 692.3,666.6 694.2,671.7 695.5,676.8 696.8,688.2 698.0,703.4 699.3,693.3 700.6,699.6 702.5,697.1 705.0,695.8 707.6,694.5 710.1,693.3 711.4,688.2 712.6,698.3 714.5,690.7 716.4,700.9 719.0,694.5 721.5,690.7 722.8,693.3 725.3,688.2 727.9,679.3 730.4,671.7 733.0,667.9 734.2,662.8 735.5,670.4 738.0,662.8 740.6,656.4 742.5,660.3 744.4,669.1 746.9,657.7 748.2,653.9 750.7,661.5 752.6,657.7 754.5,666.6 755.8,670.4 758.3,656.4 760.9,641.2 762.8,623.4 764.1,631.0 766.0,633.6 767.2,646.3 769.8,651.4 772.3,657.7 773.6,664.1 777.4,646.3 779.9,643.7 782.5,641.2 784.4,643.1 786.3,647.6 787.6,656.4 788.8,671.7 790.7,631.0 793.8,632.3 796.3,628.5 798.9,626.0 800.2,633.6 802.7,626.0 805.2,619.6 807.8,622.2 810.3,627.2 812.9,619.6 815.4,631.0 817.9,624.7 820.5,616.4 823.0,619.6 826.8,624.7 830.6,623.4 833.2,631.0 835.7,641.2 838.3,638.7 840.8,642.5 842.1,641.2 843.3,623.4 845.9,628.5 848.4,624.7 851.0,632.3 853.5,641.2 856.0,647.6 858.6,656.4 861.1,662.8 863.0,667.9 864.9,676.8 866.2,676.8 867.5,629.8 868.1,615.8 869.4,624.7 870.6,652.6 872.5,632.3 874.4,650.1 876.3,637.4 878.9,628.5 881.4,626.0 884.0,631.0 886.5,633.6 889.0,634.9 891.6,619.6 894.1,624.7 896.7,620.9 899.2,619.6 901.7,623.4 904.3,646.3 906.8,631.0 910.5,622.2 913.1,619.6 915.0,622.2 916.3,637.4 918.2,660.3 920.7,689.5 922.0,675.5 923.9,665.3 925.8,671.7 928.3,662.8 930.2,657.7 932.1,671.7 934.0,688.2 935.9,690.7 938.5,688.2 940.4,692.0 942.3,698.3 944.8,694.5 947.4,698.3 949.9,697.1 952.4,690.7 955.0,693.3 957.5,689.5 960.1,694.5 962.6,681.8 965.1,686.9 967.7,666.6 970.2,688.2 972.8,693.3 975.3,698.3 979.1,700.9 982.9,699.6 985.5,681.8 988.0,679.3 990.5,666.6 992.4,652.6 994.3,662.8 996.9,660.3 999.4,661.5 1003.2,645.0 1006.4,656.4 1009.6,648.8 1012.1,642.5 1014.7,627.2 1017.2,631.0 1020.4,627.2 1022.3,637.4 1024.8,634.9 1028.5,648.8 1031.1,651.4 1033.6,657.7 1034.9,665.3 1036.2,685.7 1037.4,694.5 1038.7,703.4 1040.6,700.9 1042.5,704.1 1045.0,697.1 1047.0,686.9 1050.1,685.7 1052.7,673.0 1054.6,652.6 1057.7,645.0 1059.0,643.7 1060.3,660.3 1062.8,646.3 1065.4,637.4 1067.9,627.2 1070.4,617.1 1073.0,615.2 1076.8,615.8 1078.7,619.6 1080.6,626.0 1082.5,615.8 1084.4,628.5 1087.0,620.9 1089.5,624.7 1092.0,627.2 1094.6,620.9 1097.1,631.0 1099.0,634.9 1100.9,623.4 1103.5,617.1 1106.0,619.6 1107.3,650.1 1108.5,684.4 1111.1,662.8 1113.6,642.5 1114.9,638.7" fill="none" stroke="#ff0000" stroke-width="1"/>
<polyline points="676.4,671.7 677.7,675.5 680.9,666.6 684.7,655.2 686.6,651.4 687.2,667.9 688.5,675.5 689.1,685.7 689.8,669.1 692.3,669.1 694.2,666.6 695.5,671.7 697.4,684.4 699.3,689.5 701.2,685.7 703.7,689.5 706.3,688.2 710.1,686.9 712.6,683.1 715.2,695.8 717.1,703.4 719.0,699.6 720.9,694.5 722.8,692.0 725.3,698.3 727.9,680.6 730.4,678.0 733.0,675.5 735.5,673.0 738.0,681.8 740.6,675.5 743.1,678.0 745.0,683.1 748.2,673.0 750.7,680.6 753.3,676.8 755.8,684.4 758.3,686.9 760.9,680.6 762.8,670.4 764.7,676.8 768.5,678.0 772.3,675.5 795.1,670.4 797.6,657.7 800.2,660.3 802.7,653.9 806.5,645.0 810.3,634.9 814.1,631.0 817.9,627.2 821.7,623.4 825.6,619.6 829.4,622.2 833.2,626.0 837.0,629.8 840.8,632.3 843.3,628.5 844.6,618.3 847.1,622.2 851.0,624.7 854.8,628.5 858.6,627.2 862.4,629.8 866.2,632.3 868.7,617.1 871.3,626.0 873.8,633.6 877.6,624.7 881.4,626.0 885.2,629.8 889.0,626.0 891.6,615.8 895.4,619.6 900.5,618.3 904.3,636.1 906.8,629.8 910.5,619.6 913.7,618.3 916.9,626.0 920.1,646.3 923.2,637.4 925.8,639.9 930.2,632.3 934.7,645.0 938.5,650.1 941.0,656.4 942.3,667.9 944.8,676.8 948.6,690.7 952.4,689.5 956.3,688.2 958.8,692.0 960.7,695.8 962.6,681.8 965.1,676.8 969.0,688.2 971.5,694.5 975.3,699.6 979.1,700.9 984.2,700.9 986.7,690.7 990.5,678.0 992.4,667.9 995.6,674.2 999.4,673.0 1003.2,662.8 1007.0,667.9 1010.9,666.6 1015.9,665.3 1019.7,669.1 1023.6,670.4 1028.5,670.4 1031.1,667.9 1033.6,667.9 1036.2,675.5 1038.7,678.0 1041.2,681.8 1043.8,684.4 1046.3,683.1 1050.8,680.6 1052.7,665.3 1055.2,660.3 1058.4,657.7 1060.3,664.1 1064.1,659.0 1067.9,656.4 1071.7,651.4 1076.8,647.6 1078.1,643.7 1079.3,629.8 1080.6,622.2 1083.1,620.9 1085.7,624.7 1088.2,622.2 1090.8,623.4 1092.7,620.9 1094.6,614.5 1097.1,627.2 1099.0,628.5 1100.9,622.2 1103.5,615.8 1106.0,618.3 1107.3,634.9 1108.5,660.3 1111.1,648.8 1113.6,632.3 1114.9,631.0" fill="none" stroke="#1e90ff" stroke-width="1"/>
<polyline points="676.4,676.8 680.9,673.0 684.7,670.4 686.6,667.9 687.9,678.0 688.5,693.3 689.8,685.7 692.3,684.4 694.9,683.1 697.4,693.3 699.9,695.8 703.7,697.1 707.6,694.5 710.1,693.3 712.6,690.7 715.2,700.9 717.1,704.7 719.0,702.2 721.5,695.8 724.1,693.3 726.6,686.9 727.9,683.1 730.4,680.6 733.0,678.0 735.5,681.8 738.0,675.5 740.6,679.3 743.1,676.8 745.7,680.6 748.2,674.2 750.7,678.0 753.3,675.5 755.8,683.1 758.3,684.4 760.9,679.3 762.8,671.7 764.7,676.8 768.5,678.0 772.3,675.5 777.4,676.8 782.5,674.2 786.3,675.5 788.8,681.8 793.8,671.7 797.6,669.8 801.4,671.7 806.5,666.6 810.3,660.3 814.1,656.4 816.7,655.2 819.2,656.4 821.7,647.6 824.3,646.3 828.1,643.7 831.9,646.3 835.7,648.8 839.5,650.1 842.1,647.6 844.0,620.9 847.1,619.6 851.0,622.2 854.8,623.4 858.6,626.0 862.4,624.7 866.2,628.5 868.1,614.5 871.3,620.9 875.1,628.5 880.2,620.9 884.0,624.7 887.8,626.0 891.6,615.8 895.4,618.3 900.5,618.3 904.3,632.3 906.8,628.5 913.7,617.1 916.9,623.4 920.7,632.3 924.5,628.5 927.0,628.5 930.9,624.7 933.4,632.3 937.2,634.9 941.0,636.1 943.6,657.7 946.1,665.3 948.6,674.2 952.4,675.5 956.3,676.8 960.1,684.4 963.9,690.7 966.4,675.5 969.0,680.6 971.5,698.3 975.3,699.6 979.1,702.2 984.2,700.9 988.0,690.7 991.8,670.4 995.6,676.8 999.4,674.2 1003.2,662.8 1007.0,670.4 1009.6,666.6 1014.7,665.3 1018.5,669.1 1022.3,670.4 1029.8,671.7 1033.6,670.4 1036.2,675.5 1038.7,679.3 1041.2,683.1 1043.8,686.9 1046.3,686.9 1050.1,684.4 1052.7,676.8 1055.2,674.2 1058.4,671.7 1060.3,676.8 1064.1,674.2 1067.9,670.4 1070.4,665.3 1074.3,662.8 1078.1,661.5 1080.6,660.3 1085.7,647.6 1088.2,643.7 1092.0,642.5 1093.3,632.3 1095.2,620.9 1098.4,631.0 1102.2,618.3 1106.0,619.6 1108.5,651.4 1110.4,642.5 1114.9,627.2" fill="none" stroke="#9400d3" stroke-width="1"/>
<polyline points="676.4,665.3 679.6,666.0 683.4,662.8 686.0,660.3 687.2,678.0 688.5,669.1 691.0,671.7 694.9,669.1 697.4,678.0 701.2,678.7 705.0,679.9 710.1,679.3 712.6,679.3 715.2,685.7 717.7,697.1 720.3,698.3 722.8,695.8 724.1,702.2 726.6,689.5 729.1,688.2 731.7,685.7 734.2,688.2 736.8,686.9 739.3,685.7 741.8,688.2 744.4,686.9 748.2,685.0 750.7,686.9 753.3,689.5 755.8,691.4 758.3,690.1 760.9,685.7 763.4,686.9 768.5,686.9 773.6,688.2 778.7,686.9 783.7,686.3 787.6,689.5 793.8,683.1 797.6,681.8 802.7,683.1 806.5,680.6 810.3,675.5 814.1,674.2 817.9,674.2 821.7,666.6 825.6,666.6 830.6,665.3 835.7,669.1 838.3,670.4 842.1,669.1 844.6,664.1 848.4,665.3 853.5,665.3 858.6,667.9 862.4,667.9 866.2,667.9 867.5,664.1 870.0,662.8 873.8,661.5 878.9,659.0 882.7,657.7 889.0,658.3 891.6,653.9 894.1,656.4 897.9,653.9 901.7,655.2 904.3,660.3 906.8,657.1 911.8,655.2 915.0,652.6 917.5,657.7 920.1,660.3 923.2,657.7 927.0,657.7 930.2,656.4 933.4,660.3 938.5,660.9 941.0,660.3 942.9,666.6 946.1,669.1 948.6,673.0 953.7,671.7 958.8,673.0 963.9,674.2 966.4,670.4 968.3,670.4 970.2,685.7 972.8,686.9 976.6,689.5 980.4,697.1 983.6,700.9 986.7,693.3 990.5,690.7 993.1,684.4 996.9,685.7 999.4,685.7 1003.2,679.3 1007.0,683.1 1010.9,681.8 1014.7,680.6 1019.7,681.2 1023.6,683.1 1029.8,684.4 1033.6,683.1 1036.2,686.9 1040.0,688.2 1043.8,692.0 1047.6,692.0 1051.4,690.7 1055.2,684.4 1059.0,684.4 1062.8,685.7 1066.6,684.4 1070.4,681.2 1074.3,679.3 1078.1,678.0 1081.9,678.0 1085.7,673.0 1089.5,671.7 1092.0,673.0 1094.6,666.6 1098.4,669.1 1102.2,665.3 1106.0,666.0 1107.3,671.7 1108.5,678.0 1111.1,673.0 1114.3,666.6" fill="none" stroke="#000" stroke-width="2.5"/>
</g>
<g font-size="10" fill="#000" letter-spacing="-0.3">
<rect x="1231" y="120" width="3" height="1" fill="#000"/>
<text x="1236" y="123.2" textLength="33" lengthAdjust="spacingAndGlyphs">101.870</text>
<rect x="1231" y="154" width="3" height="1" fill="#000"/>
<text x="1236" y="157.2" textLength="33" lengthAdjust="spacingAndGlyphs">101.795</text>
<rect x="1231" y="189" width="3" height="1" fill="#000"/>
<text x="1236" y="192.2" textLength="33" lengthAdjust="spacingAndGlyphs">101.720</text>
<rect x="1231" y="223" width="3" height="1" fill="#000"/>
<text x="1236" y="226.2" textLength="33" lengthAdjust="spacingAndGlyphs">101.645</text>
<rect x="1231" y="258" width="3" height="1" fill="#000"/>
<text x="1236" y="261.2" textLength="33" lengthAdjust="spacingAndGlyphs">101.570</text>
<rect x="1231" y="292" width="3" height="1" fill="#000"/>
<text x="1236" y="295.2" textLength="33" lengthAdjust="spacingAndGlyphs">101.495</text>
<rect x="1231" y="327" width="3" height="1" fill="#000"/>
<text x="1236" y="330.2" textLength="33" lengthAdjust="spacingAndGlyphs">101.420</text>
<rect x="1231" y="361" width="3" height="1" fill="#000"/>
<text x="1236" y="364.2" textLength="33" lengthAdjust="spacingAndGlyphs">101.345</text>
<rect x="1231" y="396" width="3" height="1" fill="#000"/>
<text x="1236" y="399.2" textLength="33" lengthAdjust="spacingAndGlyphs">101.270</text>
<rect x="1231" y="430" width="3" height="1" fill="#000"/>
<text x="1236" y="433.2" textLength="33" lengthAdjust="spacingAndGlyphs">101.195</text>
<rect x="1231" y="464" width="3" height="1" fill="#000"/>
<text x="1236" y="467.2" textLength="33" lengthAdjust="spacingAndGlyphs">101.120</text>
<rect x="1231" y="499" width="3" height="1" fill="#000"/>
<text x="1236" y="502.2" textLength="33" lengthAdjust="spacingAndGlyphs">101.045</text>
<rect x="1232" y="271" width="38" height="11" fill="#000"/><text x="1236" y="280" fill="#fff" textLength="33" lengthAdjust="spacingAndGlyphs">101.528</text>
<rect x="1231" y="506" width="3" height="1" fill="#000"/>
<text x="1234.5" y="515.0" textLength="28" lengthAdjust="spacingAndGlyphs">0.2164</text>
<rect x="1231" y="544" width="3" height="1" fill="#000"/>
<text x="1234.5" y="547.0" textLength="18" lengthAdjust="spacingAndGlyphs">0.00</text>
<rect x="1231" y="608" width="3" height="1" fill="#000"/>
<text x="1234.5" y="607.0" textLength="31" lengthAdjust="spacingAndGlyphs">-0.3742</text>
<rect x="1231" y="613" width="3" height="1" fill="#000"/>
<text x="1234.5" y="622.0" textLength="6" lengthAdjust="spacingAndGlyphs">0</text>
<rect x="1231" y="632" width="3" height="1" fill="#000"/>
<text x="1234.5" y="635.0" textLength="12" lengthAdjust="spacingAndGlyphs">-20</text>
<rect x="1231" y="659" width="3" height="1" fill="#000"/>
<text x="1234.5" y="662.0" textLength="12" lengthAdjust="spacingAndGlyphs">-50</text>
<rect x="1231" y="687" width="3" height="1" fill="#000"/>
<text x="1234.5" y="690.0" textLength="12" lengthAdjust="spacingAndGlyphs">-80</text>
<rect x="1231" y="705" width="3" height="1" fill="#000"/>
<text x="1234.5" y="702.0" textLength="18" lengthAdjust="spacingAndGlyphs">-100</text>
<rect x="676" y="707" width="1" height="4" fill="#000"/>
<text x="675" y="719" textLength="42" lengthAdjust="spacingAndGlyphs">9 Jul 2014</text>
<rect x="740" y="707" width="1" height="4" fill="#000"/>
<text x="739" y="719" textLength="50" lengthAdjust="spacingAndGlyphs">10 Jul 23:00</text>
<rect x="804" y="707" width="1" height="4" fill="#000"/>
<text x="803" y="719" textLength="50" lengthAdjust="spacingAndGlyphs">14 Jul 07:00</text>
<rect x="868" y="707" width="1" height="4" fill="#000"/>
<text x="867" y="719" textLength="50" lengthAdjust="spacingAndGlyphs">15 Jul 15:00</text>
<rect x="932" y="707" width="1" height="4" fill="#000"/>
<text x="931" y="719" textLength="50" lengthAdjust="spacingAndGlyphs">16 Jul 23:00</text>
<rect x="996" y="707" width="1" height="4" fill="#000"/>
<text x="995" y="719" textLength="50" lengthAdjust="spacingAndGlyphs">18 Jul 07:00</text>
<rect x="1060" y="707" width="1" height="4" fill="#000"/>
<text x="1059" y="719" textLength="50" lengthAdjust="spacingAndGlyphs">21 Jul 15:00</text>
<path d="M679 115 h7 l-3.5 4 z" fill="#000"/>
<text x="691" y="121" textLength="50" lengthAdjust="spacingAndGlyphs">USDJPY,H1</text><text x="749" y="121" textLength="140" lengthAdjust="spacingAndGlyphs">101.495 101.533 101.484 101.528</text>
<text x="680" y="517" textLength="70" lengthAdjust="spacingAndGlyphs">AO_Zotik 0.0610</text>
<text x="680" y="625" textLength="159" lengthAdjust="spacingAndGlyphs">WPR_VSmark(21|55|77|277) -57.9801</text>
</g>
</g>
<!-- tabs -->
<rect x="4" y="732" width="1276" height="3" fill="#f4f4f4"/>
<rect x="4" y="735" width="1276" height="1" fill="#1e1e1e"/>
<rect x="4" y="736" width="1276" height="20" fill="#e2e2e2"/>
<rect x="5" y="736" width="1" height="19" fill="#9a9a9a"/>
<rect x="4" y="755" width="1276" height="1" fill="#f8f8f8"/>
<g font-size="11" fill="#8c8c98">
<text x="19.0" y="748" textLength="64" lengthAdjust="spacingAndGlyphs">EURUSD,M15</text>
<rect x="96" y="738" width="1" height="13" fill="#8a8a8a"/>
<text x="105.5" y="748" textLength="65" lengthAdjust="spacingAndGlyphs">GBPUSD,M15</text>
<rect x="180" y="738" width="1" height="13" fill="#8a8a8a"/>
<text x="191.5" y="748" textLength="57" lengthAdjust="spacingAndGlyphs">GBPUSD,H4</text>
<rect x="260" y="738" width="1" height="13" fill="#8a8a8a"/>
<text x="270.5" y="748" textLength="65" lengthAdjust="spacingAndGlyphs">AUDUSD,M15</text>
<rect x="347" y="738" width="1" height="13" fill="#8a8a8a"/>
<text x="358.5" y="748" textLength="57" lengthAdjust="spacingAndGlyphs">AUDUSD,H4</text>
<rect x="428" y="738" width="1" height="13" fill="#8a8a8a"/>
<text x="439.5" y="748" textLength="65" lengthAdjust="spacingAndGlyphs">NZDUSD,M15</text>
<rect x="515" y="738" width="1" height="13" fill="#8a8a8a"/>
<text x="526.0" y="748" textLength="57" lengthAdjust="spacingAndGlyphs">NZDUSD,H1</text>
<rect x="595" y="738" width="1" height="13" fill="#8a8a8a"/>
<text x="606.5" y="748" textLength="65" lengthAdjust="spacingAndGlyphs">USDCHF,M15</text>
<rect x="684" y="738" width="1" height="13" fill="#8a8a8a"/>
<text x="694.0" y="748" textLength="57" lengthAdjust="spacingAndGlyphs">USDCHF,H4</text>
<rect x="764" y="738" width="1" height="13" fill="#8a8a8a"/>
<text x="774.0" y="748" textLength="65" lengthAdjust="spacingAndGlyphs">USDCAD,M15</text>
<rect x="852" y="738" width="1" height="13" fill="#8a8a8a"/>
<text x="862.0" y="748" textLength="57" lengthAdjust="spacingAndGlyphs">USDCAD,H4</text>
<rect x="931" y="738" width="1" height="13" fill="#8a8a8a"/>
<text x="941.0" y="748" textLength="64" lengthAdjust="spacingAndGlyphs">EURGBP,M15</text>
<rect x="1017" y="738" width="1" height="13" fill="#8a8a8a"/>
<text x="1027.5" y="748" textLength="55" lengthAdjust="spacingAndGlyphs">EURGBP,H1</text>
<rect x="1096" y="738" width="1" height="13" fill="#8a8a8a"/>
<text x="1106.0" y="748" textLength="64" lengthAdjust="spacingAndGlyphs">USDJPY,M15</text>
</g>
<rect x="1181" y="735" width="67" height="21" fill="#fff"/><rect x="1181" y="735" width="1" height="21" fill="#1e1e1e"/><rect x="1247" y="735" width="1" height="21" fill="#8a8a8a"/>
<text x="1190" y="748" font-size="11" fill="#000" textLength="55" lengthAdjust="spacingAndGlyphs">USDJPY,H1</text>
<path d="M1259 745.5l3 -3v6z M1275 745.5l-3 -3v6z" fill="#000"/>
</svg>
</body></html>
